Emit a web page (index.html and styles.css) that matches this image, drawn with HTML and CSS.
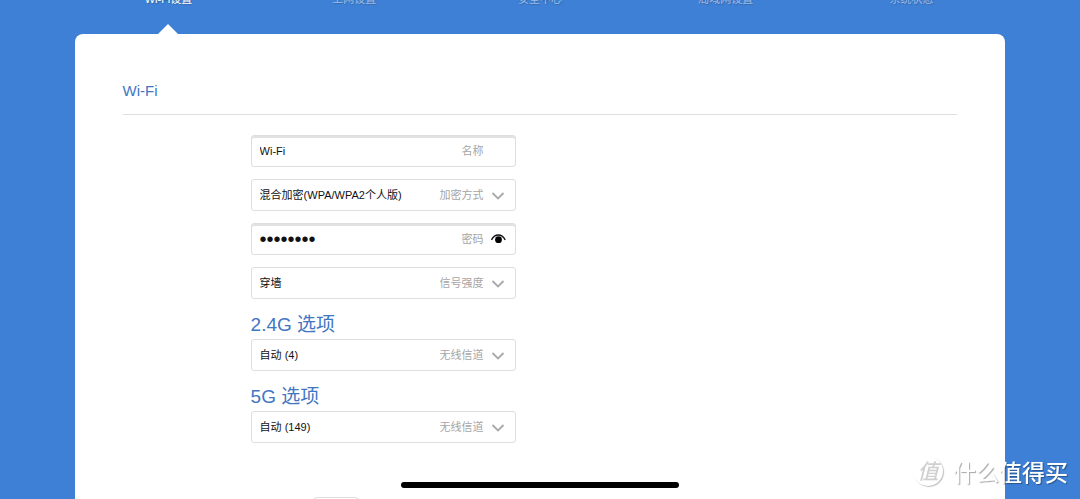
FILE: index.html
```html
<!DOCTYPE html>
<html lang="zh-CN">
<head>
<meta charset="utf-8">
<meta name="viewport" content="width=device-width, initial-scale=1">
<title>Wi-Fi设置</title>
<link rel="stylesheet" href="styles.css">
</head>
<body>
<div class="page">
  <nav class="tabs">
    <a class="tab tab-active" href="#wifi">Wi-Fi设置</a>
    <a class="tab" href="#wan">上网设置</a>
    <a class="tab" href="#security">安全中心</a>
    <a class="tab" href="#lan">局域网设置</a>
    <a class="tab" href="#status">系统状态</a>
  </nav>
  <main class="card">
    <h1 class="title">Wi-Fi</h1>
    <form class="form">
      <div class="field field-text">
        <input class="control" id="ssid" type="text" value="Wi-Fi">
        <label class="caption" for="ssid">名称</label>
        <span class="icon"></span>
      </div>
      <div class="field">
        <select class="control" id="encryption"><option>混合加密(WPA/WPA2个人版)</option></select>
        <label class="caption" for="encryption">加密方式</label>
        <svg class="icon" viewBox="0 0 16 16"><path class="chevron" d="M2.500 6 8 11.500 13.500 6"/></svg>
      </div>
      <div class="field field-text">
        <input class="control password" id="password" type="password" value="password">
        <label class="caption" for="password">密码</label>
        <button class="eye" type="button" aria-label="显示密码">
          <svg class="icon" viewBox="0 0 16 16"><path class="lid" d="M1.500 8.800C3.200 5.600 5.400 4 8.300 4s5.200 1.600 6.900 4.800"/><circle cx="8.500" cy="8.700" r="3.400"/></svg>
        </button>
      </div>
      <div class="field">
        <select class="control" id="signal"><option>穿墙</option></select>
        <label class="caption" for="signal">信号强度</label>
        <svg class="icon" viewBox="0 0 16 16"><path class="chevron" d="M2.500 6 8 11.500 13.500 6"/></svg>
      </div>
      <h2 class="subtitle">2.4G 选项</h2>
      <div class="field">
        <select class="control" id="channel24"><option>自动 (4)</option></select>
        <label class="caption" for="channel24">无线信道</label>
        <svg class="icon" viewBox="0 0 16 16"><path class="chevron" d="M2.500 6 8 11.500 13.500 6"/></svg>
      </div>
      <h2 class="subtitle">5G 选项</h2>
      <div class="field">
        <select class="control" id="channel5"><option>自动 (149)</option></select>
        <label class="caption" for="channel5">无线信道</label>
        <svg class="icon" viewBox="0 0 16 16"><path class="chevron" d="M2.500 6 8 11.500 13.500 6"/></svg>
      </div>
      <button class="save" type="submit" aria-label="保存"></button>
    </form>
  </main>
</div>
<div class="home-bar"></div>
<div class="watermark"><span class="mark">值</span><span>什么值得买</span></div>
</body>
</html>
```
FILE: styles.css
```css
* { box-sizing: border-box; }

body {
  margin: 0;
  background: #3e80d6;
  color: #111;
  font: 11px/16px "Liberation Sans", "Noto Sans CJK SC", sans-serif;
}

.page {
  display: flex;
  flex-direction: column;
  height: 100vh;
  padding: 0 7%;
  overflow: hidden;
}

.tabs {
  display: flex;
  flex: none;
  margin-top: -9px;
}

.tab {
  display: flex;
  flex: 1;
  flex-direction: column;
  align-items: center;
  height: 43px;
  color: #9dbce6;
  text-decoration: none;
  text-shadow: 1px 1px 1px #3567a8;
}

.tab-active {
  justify-content: space-between;
  color: #fff;
}

.tab-active::after {
  content: "";
  border: 10px solid transparent;
  border-top: 0;
  border-bottom-color: #fff;
}

.card {
  flex: 1 0 auto;
  margin: 0 -1px;
  padding: 43px 48px 0;
  border-radius: 8px;
  background: #fff;
}

.title {
  margin: 0 0 20px;
  padding: 4px 0 13px;
  border-bottom: 1px solid #dedede;
  color: #4176c2;
  font-size: 15px;
  font-weight: 400;
  line-height: 20px;
}

.form {
  display: flex;
  flex-direction: column;
  gap: 12px;
  width: 265px;
  margin-left: 128px;
}

.field {
  display: flex;
  align-items: center;
  height: 32px;
  padding: 0 9px 0 8px;
  border: 1px solid #dedede;
  border-radius: 3px;
  background: #fff;
}

.field-text { box-shadow: inset 0 2px 0 #e2e2e2; }

.control {
  flex: 1;
  min-width: 0;
  height: 28px;
  margin: 0;
  padding: 0;
  border: 0;
  outline: 0;
  background: transparent;
  appearance: none;
  color: #111;
  font: inherit;
}

.password { font-size: 20px; }

.caption {
  margin-right: 6px;
  color: #a5a5a5;
}

.icon {
  display: block;
  width: 16px;
  height: 16px;
}

.chevron {
  fill: none;
  stroke: #a9a9a9;
  stroke-width: 1.8;
}

.lid {
  fill: none;
  stroke: #111;
  stroke-width: 1.4;
}

.eye {
  padding: 0;
  border: 0;
  background: transparent;
}

.subtitle {
  margin: 0 0 -12px;
  color: #4176c2;
  font-size: 19px;
  font-weight: 400;
  line-height: 28px;
}

.save {
  align-self: flex-start;
  width: 52px;
  height: 32px;
  margin: 42px 0 0 59px;
  border: 1px solid #dedede;
  border-radius: 8px;
  background: #fff;
}

.home-bar {
  position: fixed;
  bottom: 11px;
  left: 50%;
  width: 278px;
  height: 6px;
  border-radius: 3px;
  background: #000;
  transform: translateX(-50%);
}

.watermark {
  position: fixed;
  right: 12px;
  bottom: 12px;
  display: flex;
  align-items: center;
  gap: 10px;
  color: #fff;
  font: 500 23px/32px "Noto Sans CJK SC", sans-serif;
  text-shadow: 1px 1px 1px rgba(0, 0, 0, 0.35);
  pointer-events: none;
}

.mark {
  width: 30px;
  height: 30px;
  border-radius: 50%;
  box-shadow: 1px 1px 1px rgba(0, 0, 0, 0.25);
  color: #d0d0d0;
  font-size: 21px;
  font-style: italic;
  line-height: 28px;
  text-align: center;
  text-shadow: none;
}
```
